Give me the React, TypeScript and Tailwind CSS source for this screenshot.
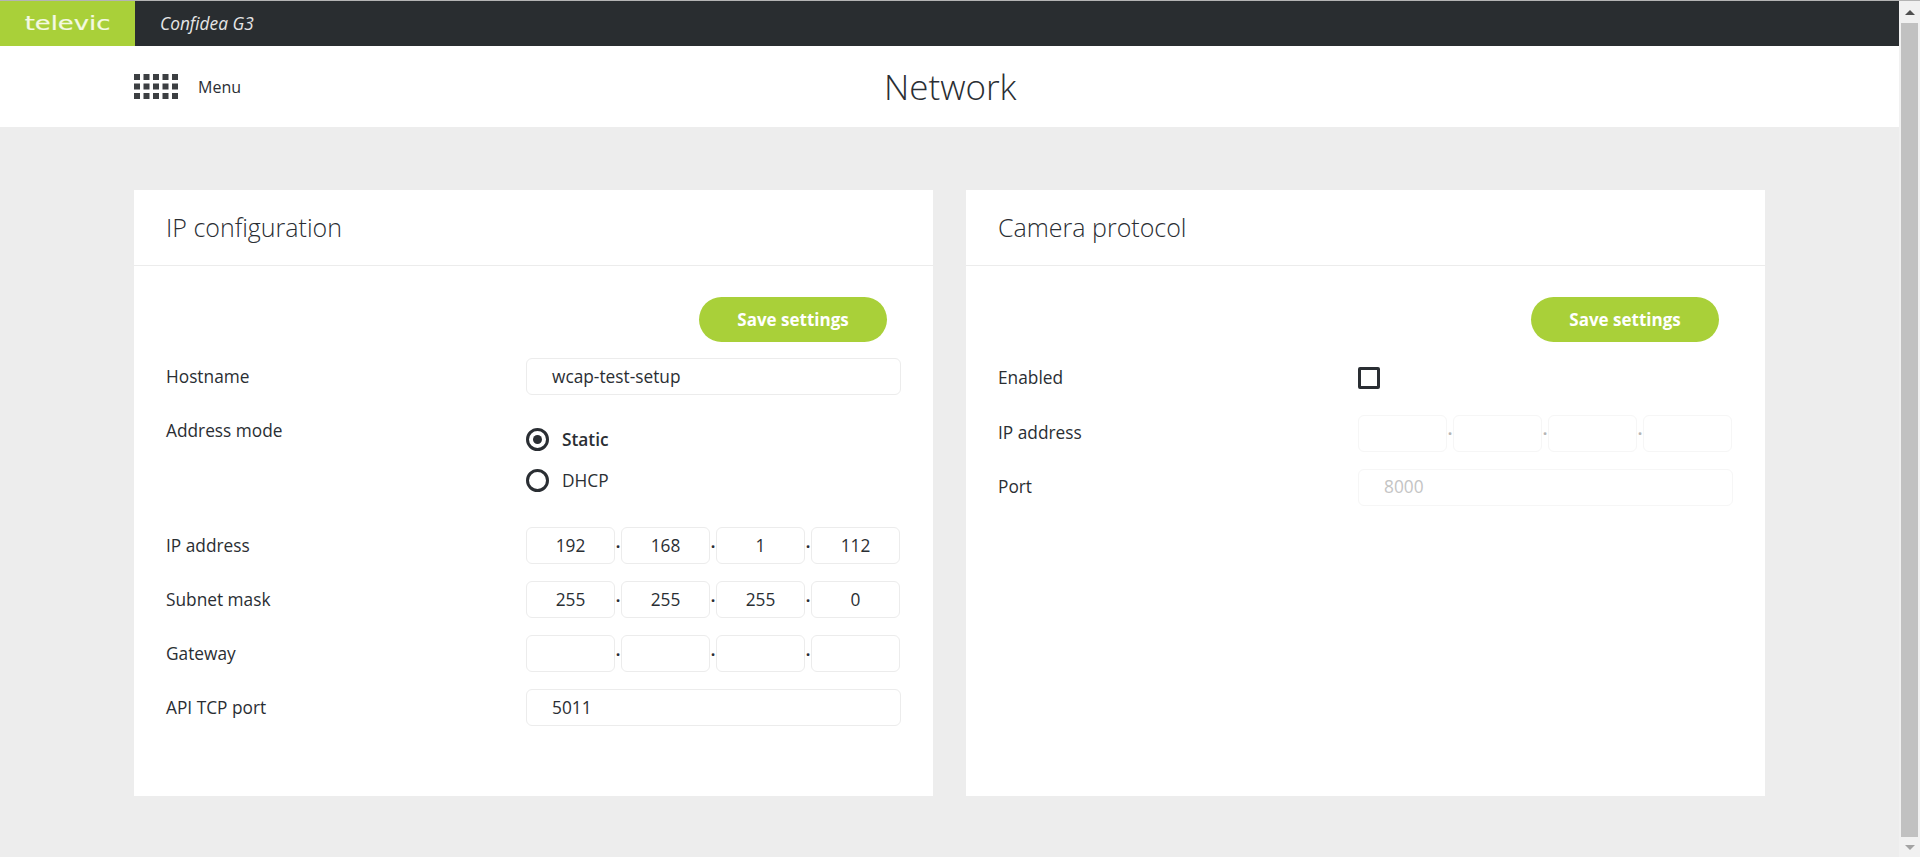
import React from 'react';

const font = "font-['Open_Sans','Noto_Sans',sans-serif]";

const Field = ({ label, children, className = 'items-center' }: { label: string; children: React.ReactNode; className?: string }) => (
  <div className={`flex ${className}`}>
    <label className="w-[392px] shrink-0 pl-8 text-[17.3px] text-[#2a2e33]">{label}</label>
    <div className="w-[375px]">{children}</div>
  </div>
);

const TextInput = ({ value, disabled }: { value: string; disabled?: boolean }) => (
  <div
    className={`flex h-[37px] items-center rounded-[6px] border pl-[25px] text-[17.3px] ${
      disabled ? 'border-[#f6f6f6] text-[#c4c4c4]' : 'border-[#ececec] text-[#2a2e33]'
    }`}
  >
    {value}
  </div>
);

const IpInput = ({ parts, disabled }: { parts: string[]; disabled?: boolean }) => (
  <div className="flex items-center">
    {parts.map((part, index) => (
      <React.Fragment key={index}>
        {index > 0 && (
          <span className={`flex w-[6px] justify-center text-[16px] font-bold leading-none ${disabled ? 'text-[#b5b5b5]' : 'text-[#2a2e33]'}`}>·</span>
        )}
        <div
          className={`flex h-[37px] w-[89px] items-center justify-center rounded-[6px] border text-[17.3px] ${
            disabled ? 'border-[#f6f6f6]' : 'border-[#ececec]'
          } text-[#2a2e33]`}
        >
          {part}
        </div>
      </React.Fragment>
    ))}
  </div>
);

const Radio = ({ label, checked }: { label: string; checked?: boolean }) => (
  <div className="flex h-[23px] items-center gap-[13px]">
    <span className="flex h-[23px] w-[23px] items-center justify-center rounded-full border-[3px] border-[#2a2e33]">
      {checked && <span className="h-[9px] w-[9px] rounded-full bg-[#2a2e33]" />}
    </span>
    <span className={`text-[17.3px] text-[#2a2e33] ${checked ? 'font-semibold' : ''}`}>{label}</span>
  </div>
);

const Card = ({ title, children }: { title: string; children: React.ReactNode }) => (
  <section className="h-[606px] w-[799px] bg-white">
    <h2 className="flex h-[76px] items-center border-b border-[#ececec] pl-8 text-[25px] font-light text-[#2a2e33]">{title}</h2>
    <div className="pt-[31px]">
      <div className="flex justify-end pr-[46px]">
        <button className="h-[45px] w-[188px] rounded-full bg-[#a9d039] text-[17px] font-bold text-white">Save settings</button>
      </div>
      {children}
    </div>
  </section>
);

const Scrollbar = () => (
  <aside className="flex w-[21px] shrink-0 flex-col items-center bg-[#f1f1f1]">
    <div className="flex h-[22px] w-full items-center justify-center">
      <svg width="10" height="5" viewBox="0 0 10 5"><path d="M5 0L10 5H0Z" fill="#505050" /></svg>
    </div>
    <div className="h-[814px] w-[17px] bg-[#c1c1c1]" />
    <div className="flex h-[20px] w-full items-center justify-center">
      <svg width="10" height="5" viewBox="0 0 10 5"><path d="M0 0H10L5 5Z" fill="#a3a3a3" /></svg>
    </div>
  </aside>
);

export default function App() {
  return (
    <div className={`flex h-[857px] w-[1920px] flex-col overflow-hidden ${font}`}>
      <div className="h-px shrink-0 bg-[#b4b4b4]" />
      <div className="flex min-h-0 flex-1">
        <div className="flex min-w-0 flex-1 flex-col bg-[#ededed]">
          <header className="flex h-[45px] shrink-0 items-center bg-[#292d30]">
            <div className="flex h-full w-[135px] items-center justify-center bg-[#a9d039]">
              <span className="origin-center scale-x-[1.36] font-['DejaVu_Sans',sans-serif] text-[19px] leading-none text-[#f4f9e2] [-webkit-text-stroke:0.2px_#f4f9e2]">televic</span>
            </div>
            <span className="ml-[25px] text-[17.3px] italic text-[#e6e6e6]">Confidea G3</span>
          </header>
          <nav className="flex h-[81px] shrink-0 items-center bg-white pl-[134px]">
            <div className="flex w-[750px] items-center">
              <svg width="45" height="26" viewBox="0 0 45 26" fill="#3c3f42">
                {[0, 9.5, 19].map((y) =>
                  [0, 9.5, 19, 28.5, 38].map((x) => <rect key={`${x}-${y}`} x={x} y={y} width="6" height="6" />)
                )}
              </svg>
              <span className="ml-[19px] text-[16px] text-[#2a2e33]">Menu</span>
            </div>
            <h1 className="pt-[2px] text-[35px] font-light text-[#2a2e33]">Network</h1>
          </nav>
          <main className="flex gap-[33px] pl-[134px] pt-[63px]">
            <Card title="IP configuration">
              <div className="mt-4 flex flex-col">
                <Field label="Hostname"><TextInput value="wcap-test-setup" /></Field>
                <Field label="Address mode" className="mt-[23px] items-start">
                  <div className="flex flex-col gap-[18px] pt-[10px]">
                    <Radio label="Static" checked />
                    <Radio label="DHCP" />
                  </div>
                </Field>
                <div className="mt-[35px] flex flex-col gap-[17px]">
                  <Field label="IP address"><IpInput parts={['192', '168', '1', '112']} /></Field>
                  <Field label="Subnet mask"><IpInput parts={['255', '255', '255', '0']} /></Field>
                  <Field label="Gateway"><IpInput parts={['', '', '', '']} /></Field>
                  <Field label="API TCP port"><TextInput value="5011" /></Field>
                </div>
              </div>
            </Card>
            <Card title="Camera protocol">
              <div className="flex flex-col">
                <Field label="Enabled" className="mt-[23px] items-center">
                  <span className="block h-[22px] w-[22px] rounded-[2px] border-[3px] border-[#2a2e33]" />
                </Field>
                <div className="mt-[24px] flex flex-col gap-[17px]">
                  <Field label="IP address"><IpInput parts={['', '', '', '']} disabled /></Field>
                  <Field label="Port"><TextInput value="8000" disabled /></Field>
                </div>
              </div>
            </Card>
          </main>
        </div>
        <Scrollbar />
      </div>
    </div>
  );
}
